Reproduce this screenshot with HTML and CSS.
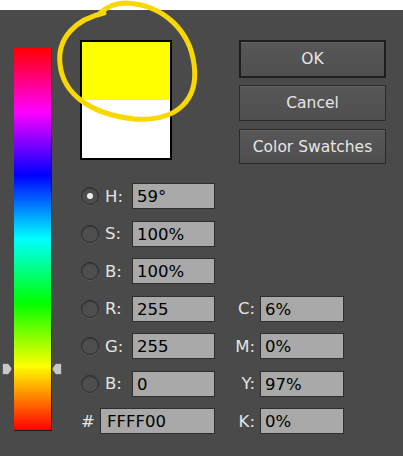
FILE: index.html
```html
<!DOCTYPE html>
<html lang="en">
<head>
    <meta charset="UTF-8">
    <meta name="viewport" content="width=device-width, initial-scale=1.0">
    <title>Color Picker</title>
    <link rel="stylesheet" href="styles.css">
</head>
<body>
    <div class="strip"></div>
    <div class="dialog">
        <div class="hue-col">
            <div class="hue-bar">
                <span class="arrow arrow-left"></span>
                <span class="arrow arrow-right"></span>
            </div>
        </div>
        <div class="main">
            <div class="top-row">
                <div class="swatch">
                    <div class="swatch-new"></div>
                    <div class="swatch-old"></div>
                </div>
                <div class="buttons">
                    <button class="btn btn-ok">OK</button>
                    <button class="btn">Cancel</button>
                    <button class="btn btn-last">Color Swatches</button>
                </div>
            </div>
            <div class="fields">
                <span class="radio checked"></span><span class="lbl">H:</span><span class="field">59°</span>
                <span></span><span></span>

                <span class="radio"></span><span class="lbl">S:</span><span class="field">100%</span>
                <span></span><span></span>

                <span class="radio"></span><span class="lbl">B:</span><span class="field">100%</span>
                <span></span><span></span>

                <span class="radio"></span><span class="lbl">R:</span><span class="field">255</span>
                <span class="lbl-r">C:</span><span class="field">6%</span>

                <span class="radio"></span><span class="lbl">G:</span><span class="field">255</span>
                <span class="lbl-r">M:</span><span class="field">0%</span>

                <span class="radio"></span><span class="lbl">B:</span><span class="field">0</span>
                <span class="lbl-r">Y:</span><span class="field">97%</span>

                <span class="hash">#</span><span class="field field-hex">FFFF00</span>
                <span class="lbl-r">K:</span><span class="field">0%</span>
            </div>
        </div>
        <!-- marker scribble drawn over the preview -->
        <svg class="scribble" width="403" height="140" viewBox="0 0 403 140">
            <path d="M104 13 C76 19 57 38 60 64 C63 94 90 114 134 119 C178 122 199 99 194 64 C190 33 166 5 126 3 C113 3 105 8 99 14"
                  fill="none" stroke="#f8d800" stroke-width="5" stroke-linecap="round" stroke-linejoin="round"/>
        </svg>
    </div>
</body>
</html>
```

FILE: styles.css
```css
body {
    margin: 0;
    background-color: #fff;
    font-family: "DejaVu Sans", Verdana, sans-serif;
}
.strip {
    height: 10px;
    background-color: #fff;
}
.dialog {
    position: relative;
    display: flex;
    height: 446px;
    background-color: #4a4a4a;
}
.hue-col {
    padding-left: 14px;
    padding-top: 38px;
}
.hue-bar {
    position: relative;
    width: 37px;
    height: 382px;
    border-right: 1px solid #1c1c30;
    border-bottom: 1px solid #1c1c1c;
    background: linear-gradient(to bottom, #ff0000 0%, #ff00ff 16.7%, #0000ff 33.3%, #00ffff 50%, #00ff00 66.7%, #ffff00 83.3%, #ff0000 100%);
}
.arrow {
    position: absolute;
    top: 315px;
    width: 10px;
    height: 12px;
    background-color: #c8c8c8;
    border: 1px solid #5a5a5a;
    box-sizing: border-box;
}
.arrow-left {
    left: -12px;
    clip-path: polygon(0 0, 55% 0, 100% 50%, 55% 100%, 0 100%);
}
.arrow-right {
    left: 38px;
    clip-path: polygon(45% 0, 100% 0, 100% 100%, 45% 100%, 0 50%);
}
.main {
    margin-left: 28px;
    padding-top: 30px;
}
.top-row {
    display: flex;
}
.swatch {
    width: 88px;
    height: 116px;
    border: 2px solid #000;
    display: flex;
    flex-direction: column;
}
.swatch-new {
    height: 58px;
    background-color: #ffff00;
}
.swatch-old {
    flex: 1;
    background-color: #fff;
}
.buttons {
    margin-left: 67px;
    width: 147px;
    display: flex;
    flex-direction: column;
    gap: 7px;
}
.btn {
    height: 36px;
    background: linear-gradient(#575757, #4f4f4f);
    border: 1px solid #2a2a2a;
    color: #e6e6e6;
    font-family: "DejaVu Sans", Verdana, sans-serif;
    font-size: 15.5px;
    padding: 0;
    box-shadow: inset 0 1px 0 #626262;
}
.btn-ok {
    height: 38px;
    border: 2px solid #1e1e1e;
}
.btn-last {
    margin-top: 1px;
    height: 35px;
}
.fields {
    margin-top: 19px;
    display: grid;
    grid-template-columns: 20px 32px 83px 45px 84px;
    grid-auto-rows: 26px;
    row-gap: 11.5px;
    align-items: center;
    font-size: 16.5px;
}
.radio {
    width: 16px;
    height: 16px;
    margin-left: 1px;
    border-radius: 50%;
    background-color: #4e4e4e;
    border: 1px solid #2c2c2c;
    box-shadow: inset 0 1px 1px #3a3a3a, 0 1px 0 #5a5a5a;
    position: relative;
}
.radio.checked::after {
    content: "";
    position: absolute;
    left: 5px;
    top: 5px;
    width: 6px;
    height: 6px;
    border-radius: 50%;
    background-color: #eee;
}
.lbl {
    padding-left: 5px;
    color: #e4e4e4;
}
.lbl-r {
    padding-right: 5px;
    text-align: right;
    color: #e4e4e4;
}
.hash {
    padding-left: 1px;
    color: #e4e4e4;
}
.field {
    height: 26px;
    line-height: 26px;
    box-sizing: border-box;
    background-color: #a9a9a9;
    border: 1px solid #2e2e2e;
    padding-left: 4px;
    color: #000;
}
.field-hex {
    grid-column: 2 / 4;
    padding-left: 6px;
}
.scribble {
    position: absolute;
    left: 0;
    top: -10px;
    pointer-events: none;
}
```
